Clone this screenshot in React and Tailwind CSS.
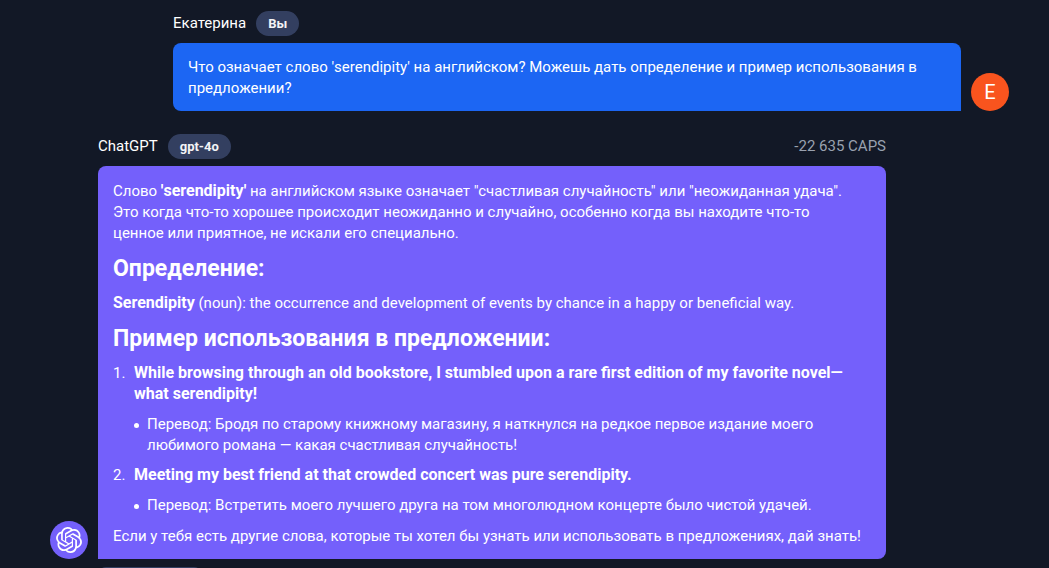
import { SiOpenai } from "react-icons/si";

function Badge({ children }) {
  return (
    <span className="rounded-full bg-[#333f60] px-3 text-[13px] leading-[25px] font-bold text-gray-100">
      {children}
    </span>
  );
}

function Avatar({ className, children }) {
  return (
    <div
      className={`flex size-[38px] shrink-0 items-center justify-center rounded-full text-white ${className}`}
    >
      {children}
    </div>
  );
}

function Bold({ children }) {
  return <strong className="text-base leading-none font-bold">{children}</strong>;
}

function Heading({ children }) {
  return <h2 className="text-[23px] leading-[29px] font-bold">{children}</h2>;
}

function Example({ number, text, translation }) {
  return (
    <li className="flex gap-2">
      <span className="w-[13px] shrink-0">{number}.</span>
      <div className="flex flex-col gap-[9px]">
        <p>
          <Bold>{text}</Bold>
        </p>
        <ul>
          <li className="flex gap-2">
            <span className="mt-[9px] size-[5px] shrink-0 rounded-full bg-white" />
            <p>{translation}</p>
          </li>
        </ul>
      </div>
    </li>
  );
}

const examples = [
  {
    text: "While browsing through an old bookstore, I stumbled upon a rare first edition of my favorite novel—what serendipity!",
    translation:
      "Перевод: Бродя по старому книжному магазину, я наткнулся на редкое первое издание моего любимого романа — какая счастливая случайность!",
  },
  {
    text: "Meeting my best friend at that crowded concert was pure serendipity.",
    translation:
      "Перевод: Встретить моего лучшего друга на том многолюдном концерте было чистой удачей.",
  },
];

function UserMessage() {
  return (
    <article className="ml-[123px] flex items-end gap-[10px]">
      <div className="min-w-0 flex-1">
        <header className="mb-[7px] flex items-center gap-[10px]">
          <span className="leading-[25px]">Екатерина</span>
          <Badge>Вы</Badge>
        </header>
        <div className="rounded-lg rounded-br-none bg-[#1c66f3] px-[15px] pt-[14px] pb-3">
          <p>
            Что означает слово 'serendipity' на английском? Можешь дать определение и пример
            использования в предложении?
          </p>
        </div>
      </div>
      <Avatar className="bg-[#f9541e] text-xl">E</Avatar>
    </article>
  );
}

function BotMessage() {
  return (
    <article className="mr-[123px] flex items-end gap-[10px]">
      <Avatar className="bg-[#7460fb]">
        <SiOpenai className="size-[26px]" />
      </Avatar>
      <div className="min-w-0 flex-1">
        <header className="mb-[7px] flex items-center gap-[10px]">
          <span className="leading-[25px]">ChatGPT</span>
          <Badge>gpt-4o</Badge>
          <span className="ml-auto leading-[25px] text-gray-400">-22 635 CAPS</span>
        </header>
        <div className="flex flex-col gap-[10px] rounded-lg rounded-bl-none bg-[#7460fb] px-[15px] pt-[15px] pb-3">
          <p>
            Слово <Bold>'serendipity'</Bold> на английском языке означает "счастливая случайность"
            или "неожиданная удача". Это когда что-то хорошее происходит неожиданно и случайно,
            особенно когда вы находите что-то ценное&nbsp;или приятное, не искали его специально.
          </p>
          <Heading>Определение:</Heading>
          <p>
            <Bold>Serendipity</Bold> (noun): the occurrence and development of events by chance in
            a happy or beneficial way.
          </p>
          <Heading>Пример использования в предложении:</Heading>
          <ol className="flex flex-col gap-[9px]">
            {examples.map((example, i) => (
              <Example key={i} number={i + 1} {...example} />
            ))}
          </ol>
          <p>
            Если у тебя есть другие слова, которые ты хотел бы узнать или использовать в
            предложениях, дай знать!
          </p>
        </div>
      </div>
    </article>
  );
}

export default function App() {
  return (
    <main className="h-screen overflow-hidden bg-[#121826] font-['Roboto',sans-serif] text-[15px] leading-[21px] text-white">
      <div className="flex flex-col gap-[23px] pt-[11px] pr-10 pl-[50px]">
        <UserMessage />
        <BotMessage />
      </div>
      <div className="mt-2 ml-[98px] h-6 w-[104px] rounded-lg bg-[#333f60]" />
    </main>
  );
}
